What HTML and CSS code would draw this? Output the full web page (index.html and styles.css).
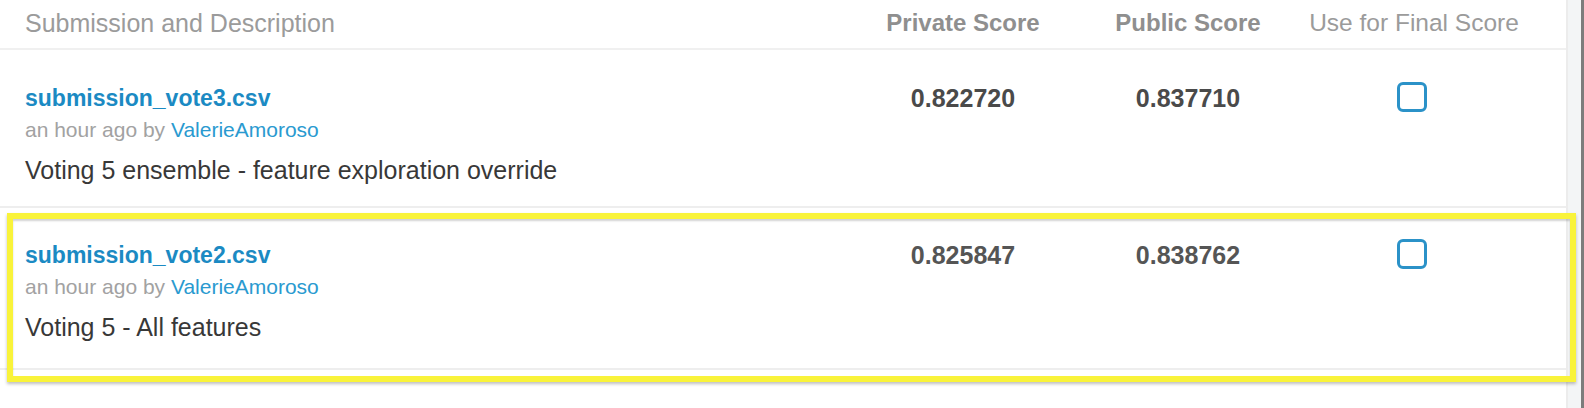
FILE: index.html
```html
<!DOCTYPE html>
<html>
<head>
<meta charset="utf-8">
<link rel="stylesheet" href="styles.css">
</head>
<body>
<div class="page">
  <div class="table">
    <div class="row head">
      <div class="h-desc">Submission and Description</div>
      <div class="h-col strong">Private Score</div>
      <div class="h-col strong">Public Score</div>
      <div class="h-col plain">Use for Final Score</div>
    </div>
    <div class="row sub">
      <div class="info">
        <div class="title">submission_vote3.csv</div>
        <div class="meta">an hour ago by <span class="user">ValerieAmoroso</span></div>
        <div class="desc">Voting 5 ensemble - feature exploration override</div>
      </div>
      <div class="score">0.822720</div>
      <div class="score">0.837710</div>
      <div class="check"><span class="box"></span></div>
    </div>
    <div class="row sub hl">
      <div class="info">
        <div class="title">submission_vote2.csv</div>
        <div class="meta">an hour ago by <span class="user">ValerieAmoroso</span></div>
        <div class="desc">Voting 5 - All features</div>
      </div>
      <div class="score light">0.825847</div>
      <div class="score light">0.838762</div>
      <div class="check"><span class="box"></span></div>
    </div>
  </div>
  <div class="scroll"></div>
</div>
</body>
</html>
```

FILE: styles.css
```css
html, body {
  margin: 0;
  padding: 0;
  background: #ffffff;
}
body {
  font-family: "Liberation Sans", Arial, sans-serif;
}
.page {
  display: flex;
  width: 1584px;
  height: 408px;
}
.table {
  width: 1566px;
  border-right: 2px solid #ececec;
}
.scroll {
  flex: 1;
  background: #f3f5f6;
  border-right: 3px solid #7c7c7c;
}
.row {
  display: grid;
  grid-template-columns: 1fr 226px 224px 224px;
  padding: 0 42px 0 25px;
  box-sizing: border-box;
}
.head {
  height: 50px;
  padding-top: 8px;
  border-bottom: 2px solid #f0f0f0;
}
.h-desc, .h-col {
  font-size: 25px;
  line-height: 30px;
  color: #9b9b9b;
}
.h-col {
  text-align: center;
}
.h-col.plain {
  font-size: 24.5px;
  padding-left: 4px;
}
.h-col.strong {
  color: #8f8f8f;
  font-weight: 600;
  font-size: 24px;
}
.sub {
  padding-top: 33px;
  padding-bottom: 21px;
  border-bottom: 2px solid #eeeeee;
}
.sub.hl {
  position: relative;
  padding-top: 32px;
  padding-bottom: 26px;
}
.sub.hl::after {
  content: "";
  position: absolute;
  top: 5px;
  left: 7px;
  right: -10px;
  bottom: -14px;
  border: 6px solid #f9f33a;
  box-shadow: 0 2px 3px rgba(0,0,0,0.25), inset 0 2px 2px rgba(0,0,0,0.18);
  pointer-events: none;
}
.title {
  font-size: 23px;
  line-height: 30px;
  font-weight: 700;
  color: #1b8ac3;
}
.meta {
  margin-top: 2px;
  font-size: 21px;
  line-height: 30px;
  color: #a2a2a2;
}
.user {
  color: #2a9ad0;
}
.desc {
  margin-top: 10px;
  font-size: 25px;
  line-height: 30px;
  color: #383838;
}
.score {
  text-align: center;
  font-size: 25px;
  line-height: 30px;
  font-weight: 700;
  color: #4a4a4a;
}
.score.light {
  color: #555555;
}
.check {
  display: flex;
  justify-content: center;
  margin-top: -1px;
}
.box {
  display: block;
  width: 24px;
  height: 24px;
  border: 3px solid #2b92c8;
  border-radius: 6px;
}
```
